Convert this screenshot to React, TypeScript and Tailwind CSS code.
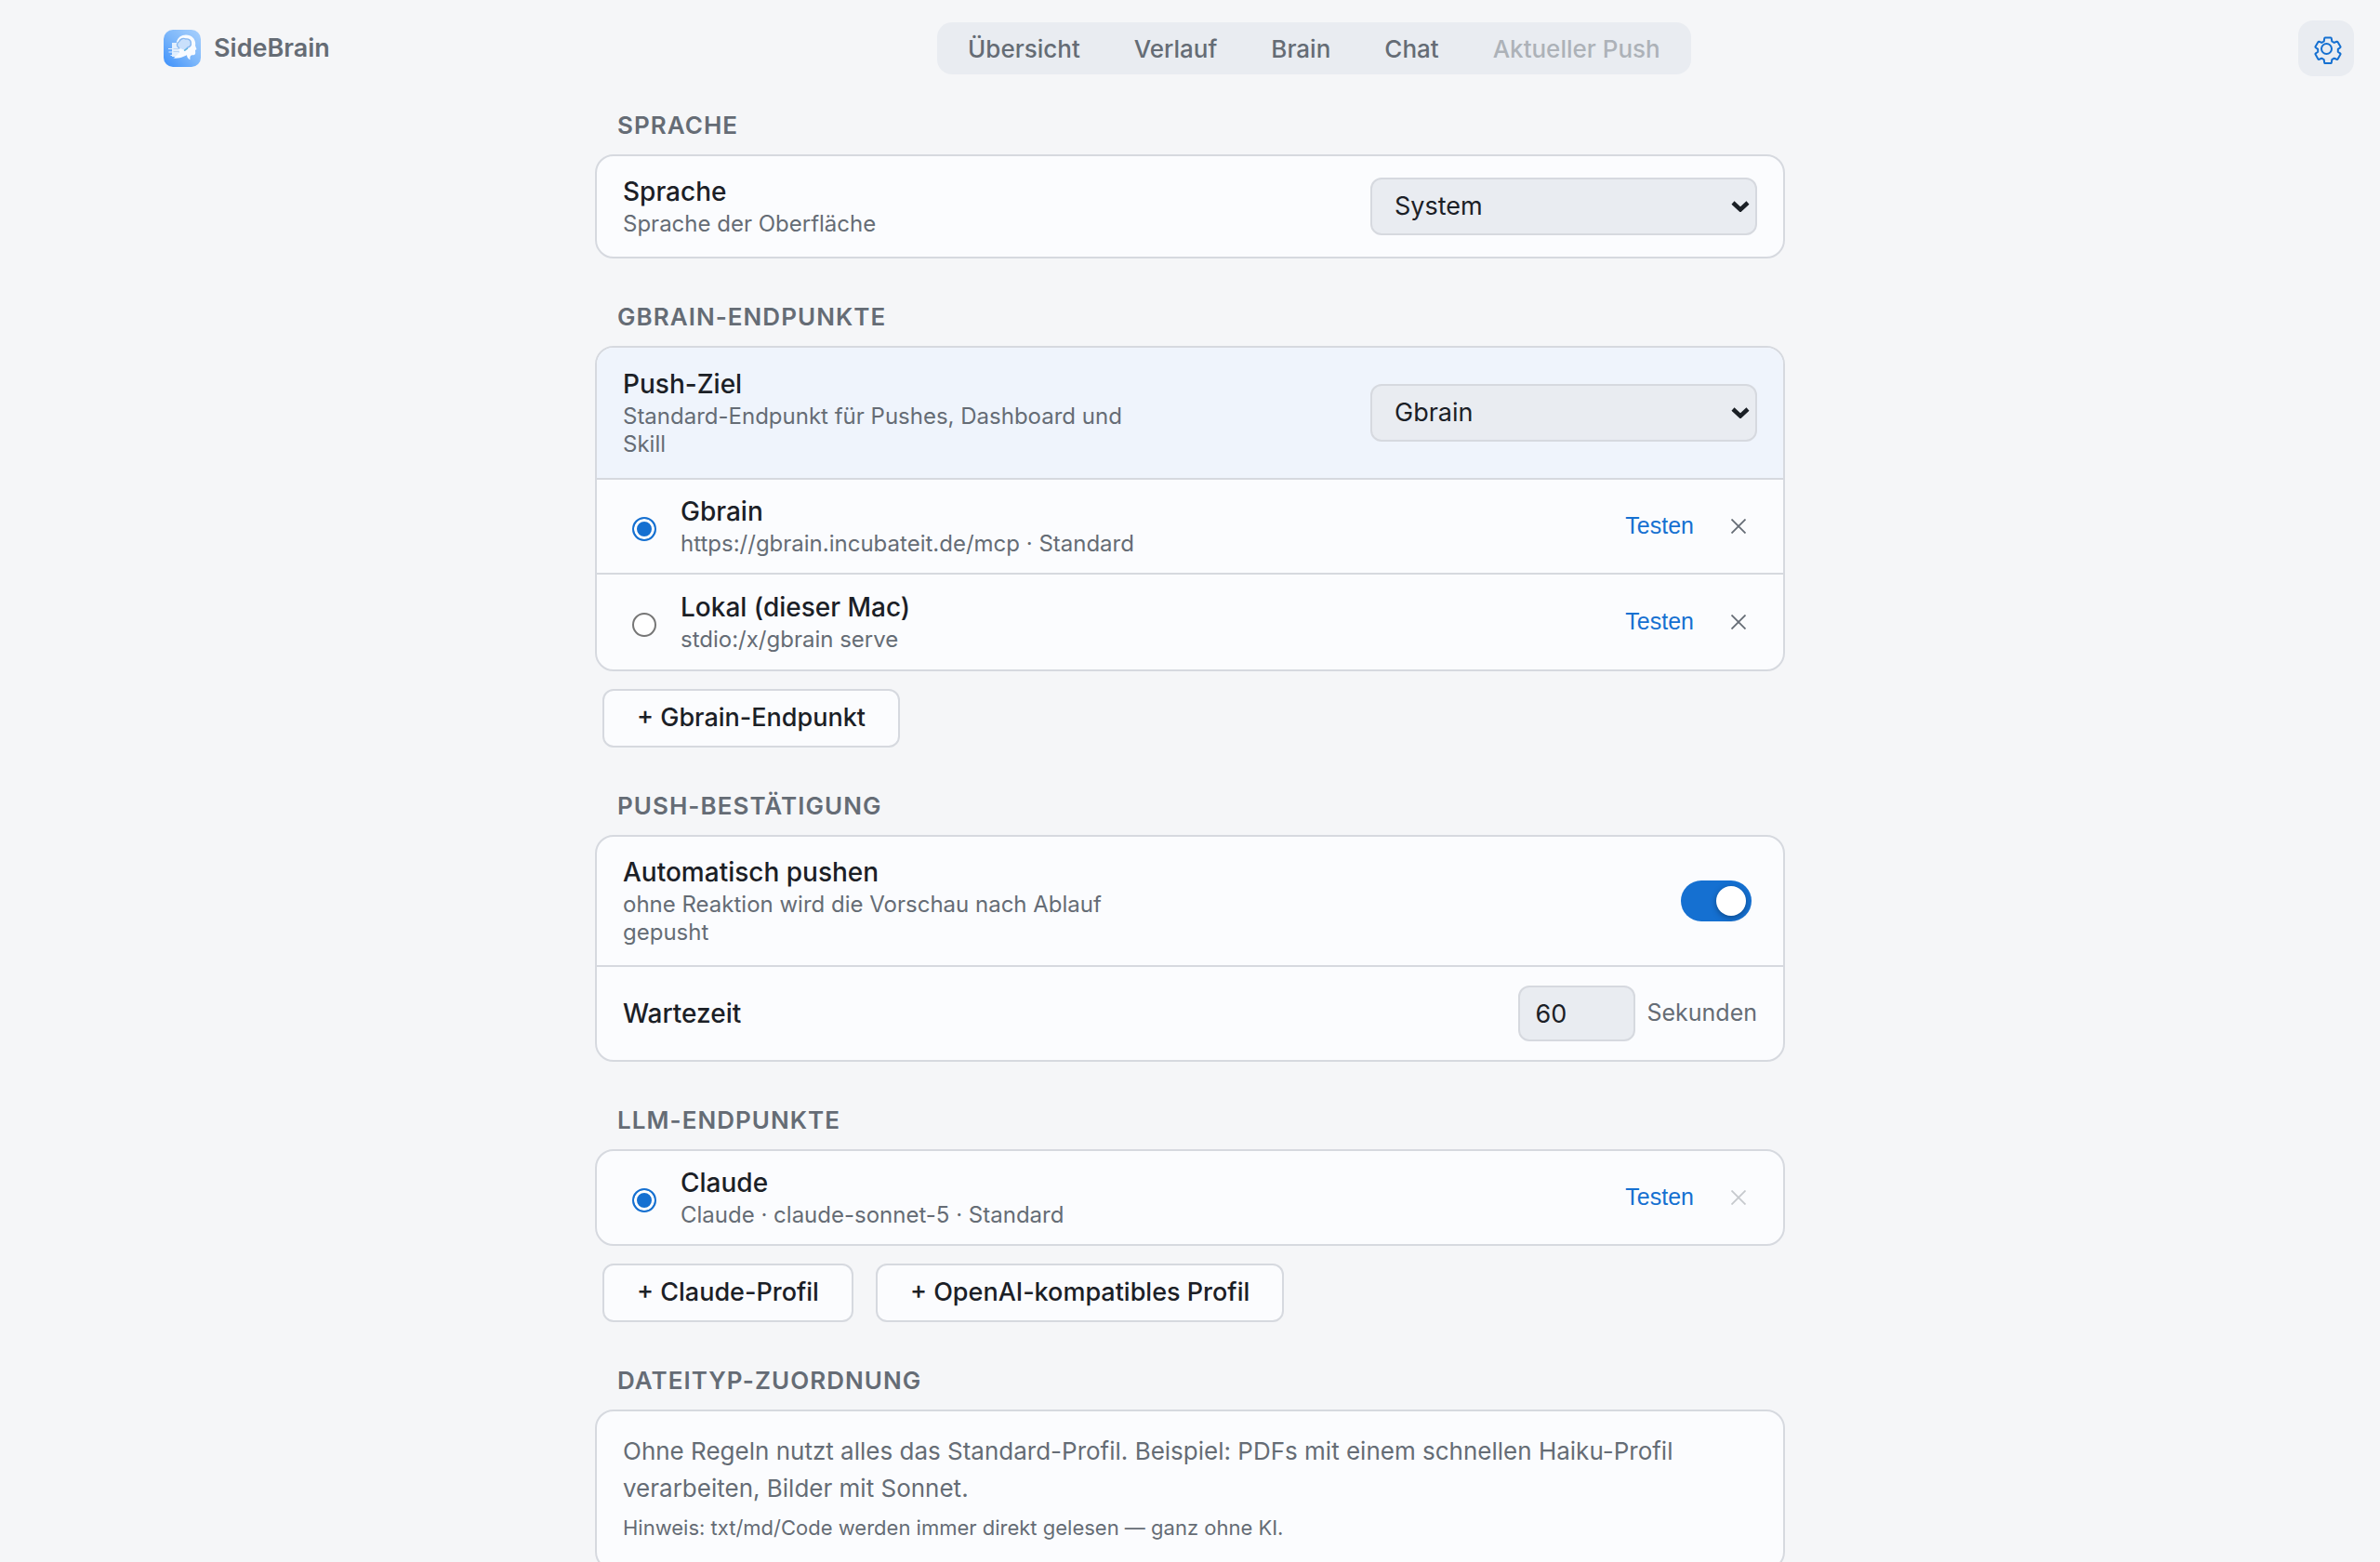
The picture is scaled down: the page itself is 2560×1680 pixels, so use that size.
import { useState } from "react";
import type { ReactNode } from "react";

function Logo() {
  return (
    <svg viewBox="0 0 40 40" className="size-10 shrink-0" aria-hidden="true">
      <defs>
        <linearGradient id="logo-bg" x1="0" y1="1" x2="1" y2="0">
          <stop offset="0" stopColor="#3b8ffb" />
          <stop offset="0.5" stopColor="#7db7fa" />
          <stop offset="1" stopColor="#a9d1fd" />
        </linearGradient>
      </defs>
      <rect width="40" height="40" rx="10" fill="url(#logo-bg)" />
      <path d="M9 14h7v15H9z" fill="#e3effd" />
      <path d="M5 20.500h6M5.500 24h5M7.500 27.500h5" stroke="#e3effd" strokeWidth="1.200" />
      <path
        d="M14 13c1-4.500 5-7.500 10-7.500 6 0 10 4 10.200 9.500l-.2 2 1.500 4-1.500 1 .2 3c-.2 2-1.500 2.300-4 2.300-1.800.5-2 2.500-1.700 5-2-.8-3.500-2.600-3.500-5l-4 1.700c-3 1.200-7 2-10.500 1.500 0 0 5-3 6-6.500z"
        fill="#f8fbff"
      />
      <path
        d="M16.500 19.500c-3-1.500-2.500-5.500.3-7 1-2.800 4.500-3.800 7-2.500 3-.5 5.800 1.500 5.400 4 .8 2.500-1 4.500-3.200 5l-3 3"
        fill="#c9e0fb"
        stroke="#86b7f0"
        strokeWidth="1.400"
        strokeLinecap="round"
      />
      <path d="M10.500 20.500h7M10.500 23.500h6" stroke="#b8d4f5" strokeWidth="1" />
      <path d="M22 22.500l4-2.500" stroke="#5fb7dc" strokeWidth="1.200" />
    </svg>
  );
}

function GearIcon() {
  return (
    <svg viewBox="0 0 30 30" className="size-[30px]" fill="none" stroke="currentColor" strokeWidth="2" strokeLinejoin="round" aria-hidden="true">
      <path d="M12 1.500h6q.7 0 .8.800l.5 3.200 2.400 1.400 2.700-1.100q.8-.3 1.200.4l2.800 4.800q.4.700-.3 1.200l-2.300 1.700v2.800l2.300 1.700q.7.500.3 1.200l-2.800 4.800q-.4.700-1.200.4l-2.700-1.100-2.400 1.400-.5 3.200q-.1.800-.8.800h-6q-.7 0-.8-.8l-.5-3.200-2.400-1.400-2.700 1.100q-.8.300-1.200-.4l-2.800-4.800q-.4-.7.3-1.200l2.300-1.700v-2.800l-2.300-1.700q-.7-.5-.3-1.200l2.800-4.800q.4-.7 1.200-.4l2.700 1.100 2.400-1.400.5-3.200q.1-.8.800-.8z" />
      <circle cx="13.500" cy="13.500" r="5.500" />
    </svg>
  );
}

function CloseIcon() {
  return (
    <svg viewBox="0 0 16 16" className="size-4" fill="none" stroke="currentColor" strokeWidth="1.800" aria-hidden="true">
      <path d="M0.500 0.500l15 15M15.500 0.500l-15 15" />
    </svg>
  );
}

const labelText = "text-[28px] leading-9 font-medium text-[#1b2026]";
const subText = "mt-0.5 block text-[24px] leading-[30px] text-[#656c75]";

function Section({ title, children }: { title: string; children: ReactNode }) {
  return (
    <section className="mb-12">
      <h2 className="mb-4 pl-6 text-[26px] leading-[30px] font-semibold tracking-[0.04em] text-[#656c75] uppercase">{title}</h2>
      {children}
    </section>
  );
}

function Card({ children }: { children: ReactNode }) {
  return (
    <div className="divide-y-2 divide-[#d6d9df] overflow-hidden rounded-[20px] border-2 border-[#d6d9df] bg-[#fbfcfe]">
      {children}
    </div>
  );
}

function SelectRow({ id, label, hint, options, className }: { id: string; label: string; hint: string; options: string[]; className: string }) {
  return (
    <div className={`flex items-center justify-between px-7 ${className}`}>
      <div className="max-w-[560px]">
        <label htmlFor={id} className={`block ${labelText}`}>{label}</label>
        <span className={subText}>{hint}</span>
      </div>
      <div className="relative w-1/3 max-w-[416px] min-w-[416px]">
        <select
          id={id}
          className="h-[62px] w-full appearance-none rounded-xl border-2 border-[#d6d9df] bg-[#e9ecf1] px-6 text-[27px] text-[#1b2026]"
        >
          {options.map((o) => (
            <option key={o}>{o}</option>
          ))}
        </select>
        <svg viewBox="0 0 20 12" className="pointer-events-none absolute top-1/2 right-2 h-3 w-5 -translate-y-1/2" fill="none" stroke="#1b2026" strokeWidth="4.500" aria-hidden="true">
          <path d="M2 2l8 7.500 8-7.500" />
        </svg>
      </div>
    </div>
  );
}

function EndpointRow({ group, name, detail, checked, locked, className }: { group: string; name: string; detail: string; checked?: boolean; locked?: boolean; className: string }) {
  const id = `${group}-${name}`;
  return (
    <div className={`flex items-center px-7 ${className}`}>
      <input
        id={id}
        type="radio"
        name={group}
        defaultChecked={checked}
        className="mt-1.5 mr-[26px] ml-2.5 size-[26px] shrink-0 appearance-none rounded-full border-2 border-[#767676] bg-white checked:border-[#1570d1] checked:bg-[#1570d1] checked:shadow-[inset_0_0_0_3px_#ffffff]"
      />
      <div className="flex-1">
        <label htmlFor={id} className={`block ${labelText}`}>{name}</label>
        <span className={subText}>{detail}</span>
      </div>
      <div className="flex items-center gap-4">
        <button className='px-3 font-["Liberation_Sans",Arial,sans-serif] text-[25px] text-[#1570d1]'>Testen</button>
        <button aria-label={`${name} entfernen`} disabled={locked} className="flex size-10 items-center justify-center text-[#656c75] disabled:opacity-35">
          <CloseIcon />
        </button>
      </div>
    </div>
  );
}

function AddButton({ children }: { children: ReactNode }) {
  return (
    <button className="h-[63px] rounded-xl border-2 border-[#d6d9df] bg-[#fbfcfe] px-[35px] text-[27px] font-medium text-[#1b2026]">{children}</button>
  );
}

const tabs = ["Übersicht", "Verlauf", "Brain", "Chat", "Aktueller Push"];

export default function App() {
  const [auto, setAuto] = useState(true);
  return (
    <div className='h-screen overflow-y-auto bg-[#f5f6f8] font-["Inter",sans-serif] [scrollbar-width:none]'>
      <header className="flex h-[104px] items-center justify-between pr-7 pl-44">
        <div className="flex items-center gap-3.5">
          <Logo />
          <span className="text-[27px] font-semibold text-[#656c75]">SideBrain</span>
        </div>
        <nav className="flex h-14 items-center gap-0.5 rounded-2xl bg-[#e9ecf1] px-[5px]">
          {tabs.map((t, i) => (
            <button key={t} disabled={i === 4} className="px-7 text-[26px] font-medium text-[#656c75] disabled:opacity-45">
              {t}
            </button>
          ))}
        </nav>
        <button aria-label="Einstellungen" className="flex size-15 items-center justify-center rounded-2xl bg-[#e9ecf1] pt-1 pl-1 text-[#1570d1]">
          <GearIcon />
        </button>
      </header>

      <main className="mx-auto max-w-[1280px] pt-4">
        <Section title="Sprache">
          <Card>
            <SelectRow id="language" label="Sprache" hint="Sprache der Oberfläche" options={["System", "Deutsch", "English"]} className="py-5" />
          </Card>
        </Section>

        <Section title="Gbrain-Endpunkte">
          <Card>
            <SelectRow
              id="target"
              label="Push-Ziel"
              hint="Standard-Endpunkt für Pushes, Dashboard und Skill"
              options={["Gbrain", "Lokal (dieser Mac)"]}
              className="bg-[#eff4fc] py-[21px]"
            />
            <EndpointRow group="gbrain" name="Gbrain" detail="https://gbrain.incubateit.de/mcp · Standard" checked className="py-4" />
            <EndpointRow group="gbrain" name="Lokal (dieser Mac)" detail="stdio:/x/gbrain serve" className="py-[17px]" />
          </Card>
          <div className="mt-[19px] flex gap-6 pl-2">
            <AddButton>+ Gbrain-Endpunkt</AddButton>
          </div>
        </Section>

        <Section title="Push-Bestätigung">
          <Card>
            <div className="flex items-center justify-between px-7 py-5">
              <div className="max-w-[560px]">
                <label htmlFor="auto" className={`block ${labelText}`}>Automatisch pushen</label>
                <span className={subText}>ohne Reaktion wird die Vorschau nach Ablauf gepusht</span>
              </div>
              <input
                id="auto"
                type="checkbox"
                role="switch"
                checked={auto}
                onChange={(e) => setAuto(e.target.checked)}
                className="mr-1.5 flex h-11 w-[76px] appearance-none items-center rounded-full bg-[#c3c7ce] px-1.5 before:size-8 before:rounded-full before:bg-white before:shadow-[0_2px_6px_rgba(0,0,0,0.35)] checked:justify-end checked:bg-[#1570d1]"
              />
            </div>
            <div className="flex items-center justify-between px-7 py-5">
              <label htmlFor="wait" className={labelText}>Wartezeit</label>
              <div className="flex items-center gap-3">
                <input
                  id="wait"
                  type="text"
                  inputMode="numeric"
                  defaultValue="60"
                  className="h-15 w-[126px] rounded-xl border-2 border-[#d6d9df] bg-[#e9ecf1] px-4 text-[27px] text-[#1b2026]"
                />
                <span className="text-[25px] text-[#656c75]">Sekunden</span>
              </div>
            </div>
          </Card>
        </Section>

        <Section title="LLM-Endpunkte">
          <Card>
            <EndpointRow group="llm" name="Claude" detail="Claude · claude-sonnet-5 · Standard" checked locked className="py-4" />
          </Card>
          <div className="mt-[19px] flex gap-6 pl-2">
            <AddButton>+ Claude-Profil</AddButton>
            <AddButton>+ OpenAI-kompatibles Profil</AddButton>
          </div>
        </Section>

        <Section title="Dateityp-Zuordnung">
          <Card>
            <div className="px-7 pt-[23px] pb-7 text-[#656c75]">
              <p className="text-[26px] leading-10">
                Ohne Regeln nutzt alles das Standard-Profil. Beispiel: PDFs mit einem schnellen Haiku-Profil verarbeiten, Bilder mit Sonnet.
              </p>
              <p className="mt-1.5 text-[22px] leading-8">Hinweis: txt/md/Code werden immer direkt gelesen — ganz ohne KI.</p>
            </div>
          </Card>
        </Section>
      </main>
    </div>
  );
}
